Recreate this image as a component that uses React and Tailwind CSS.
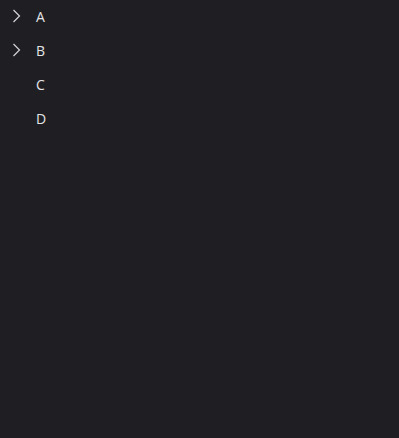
import React from "react";

const items = [
  { id: "a", label: "A", hasChildren: true },
  { id: "b", label: "B", hasChildren: true },
  { id: "c", label: "C", hasChildren: false },
  { id: "d", label: "D", hasChildren: false },
];

function Chevron() {
  return (
    <svg width="10" height="14" viewBox="0 0 10 14" fill="none" className="text-[#d4d4d8]">
      <path d="M1.5 1L7.5 7L1.5 13" stroke="currentColor" strokeWidth="1.2" />
    </svg>
  );
}

export default function App() {
  return (
    <div
      className="min-h-screen w-full bg-[#1f1f23] text-[#e4e4e7]"
      style={{ fontFamily: '"Open Sans", "Noto Sans", sans-serif' }}
    >
      <ul className="flex flex-col">
        {items.map((item) => (
          <li key={item.id} className="flex h-[34px] items-center pb-[2px] text-[14px]">
            <span className="flex w-[36px] items-center pl-[12px]">
              {item.hasChildren && <Chevron />}
            </span>
            <span>{item.label}</span>
          </li>
        ))}
      </ul>
    </div>
  );
}
